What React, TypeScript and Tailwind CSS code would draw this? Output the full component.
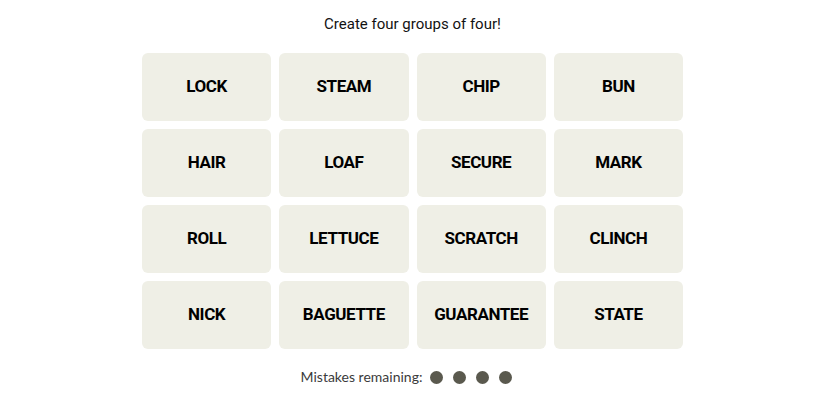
const WORDS = [
  'LOCK', 'STEAM', 'CHIP', 'BUN',
  'HAIR', 'LOAF', 'SECURE', 'MARK',
  'ROLL', 'LETTUCE', 'SCRATCH', 'CLINCH',
  'NICK', 'BAGUETTE', 'GUARANTEE', 'STATE',
];

export default function App() {
  return (
    <div className="flex min-h-[413px] w-full flex-col items-center bg-white pt-[14px] font-['Roboto',sans-serif] text-[#121212]">
      <p className="text-[15px] leading-[20px]">Create four groups of four!</p>

      <div className="mt-[19px] grid w-[541px] grid-cols-4 gap-2">
        {WORDS.map((w) => (
          <button
            key={w}
            className="flex h-[68px] items-center justify-center rounded-md bg-[#efefe6] text-[17px] font-bold tracking-tight text-black"
          >
            {w}
          </button>
        ))}
      </div>

      <div className="mt-[18px] flex items-center pr-[12px]">
        <span className="font-['Lato',sans-serif] text-[14px] leading-[20px] text-[#3b3b3b]">Mistakes remaining:</span>
        <div className="ml-[8px] flex gap-[10px]">
          {[0, 1, 2, 3].map((i) => (
            <span key={i} className="h-[13px] w-[13px] rounded-full bg-[#5a594e]" />
          ))}
        </div>
      </div>
    </div>
  );
}
